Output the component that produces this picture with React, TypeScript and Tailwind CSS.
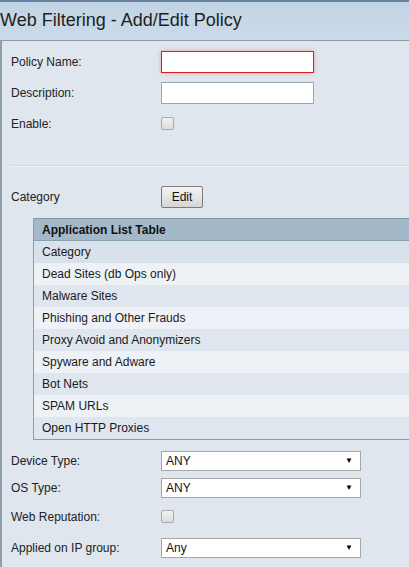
import React from "react";

const Label = ({ children }: { children: React.ReactNode }) => (
  <div className="w-[150px] shrink-0 text-[12px] text-[#222]">{children}</div>
);

const Checkbox = () => (
  <div className="w-[13px] h-[13px] rounded-[2px] border border-[#a9a9a9] bg-gradient-to-b from-[#f2f2f2] to-[#dcdcdc]" />
);

const Select = ({ value }: { value: string }) => (
  <div className="w-[200px] h-[20px] bg-white border border-[#a6a6a6] flex items-center justify-between pl-[4px] pr-[7px] text-[12px] text-[#111]">
    <span>{value}</span>
    <span className="text-[8px] leading-none text-black">▼</span>
  </div>
);

const rows = [
  "Dead Sites (db Ops only)",
  "Malware Sites",
  "Phishing and Other Frauds",
  "Proxy Avoid and Anonymizers",
  "Spyware and Adware",
  "Bot Nets",
  "SPAM URLs",
  "Open HTTP Proxies",
];

export default function App() {
  return (
    <div className="w-[409px] h-[567px] overflow-hidden bg-[#dfe6ee] font-['Liberation_Sans',Arial,sans-serif] flex flex-col">
      <div className="h-[41px] shrink-0 bg-gradient-to-b from-[#c2d4e5] to-[#cbdae8] border-t-2 border-[#66839f] border-b border-b-[#8c9cab] flex items-center pb-[2px]">
        <span className="text-[18px] text-[#1e1e1e] leading-none">Web Filtering - Add/Edit Policy</span>
      </div>
      <div className="flex-1 border-l-2 border-[#8e9daa] pl-[9px] pt-[5px]">
        <div className="flex items-center h-[31px]">
          <Label>Policy Name:</Label>
          <div className="w-[153px] h-[22px] bg-white border border-[#d5202a] shadow-[0_0_4px_#f29a9a]" />
        </div>
        <div className="flex items-center h-[31px]">
          <Label>Description:</Label>
          <div className="w-[153px] h-[22px] bg-white border border-[#9aa6b1]" />
        </div>
        <div className="flex items-center h-[31px]">
          <Label>Enable:</Label>
          <Checkbox />
        </div>
        <div className="h-[26px]" />
        <div className="border-t border-[#cfd8e1]">
          <div className="border-t border-[#f1f5f8]" />
        </div>
        <div className="h-[19px]" />
        <div className="flex items-center h-[22px]">
          <Label>Category</Label>
          <div className="w-[42px] h-[22px] rounded-[2px] border border-[#7c7c7c] bg-gradient-to-b from-[#f4f4f4] to-[#d6d6d6] flex items-center justify-center text-[12px] text-[#111]">
            Edit
          </div>
        </div>
        <div className="h-[10px]" />
        <div className="ml-[22px] border-l border-b border-[#8e9daa] text-[12px] text-[#1a1a1a]">
          <div className="h-[23px] bg-[#a3b9ca] border-t border-[#7f98a8] border-b border-b-[#8aa1b1] flex items-center pl-[8px] font-bold text-[#111]">
            Application List Table
          </div>
          <div className="h-[22px] bg-[#d9e2ea] flex items-center pl-[8px]">Category</div>
          {rows.map((r, i) => (
            <div
              key={r}
              className={`h-[22px] flex items-center pl-[8px] ${i % 2 === 0 ? "bg-[#eef2f7]" : "bg-[#dfe6ee]"}`}
            >
              {r}
            </div>
          ))}
        </div>
        <div className="h-[7px]" />
        <div className="flex items-center h-[27px]">
          <Label>Device Type:</Label>
          <Select value="ANY" />
        </div>
        <div className="flex items-center h-[27px]">
          <Label>OS Type:</Label>
          <Select value="ANY" />
        </div>
        <div className="flex items-center h-[31px]">
          <Label>Web Reputation:</Label>
          <Checkbox />
        </div>
        <div className="flex items-center h-[31px]">
          <Label>Applied on IP group:</Label>
          <Select value="Any" />
        </div>
      </div>
    </div>
  );
}
